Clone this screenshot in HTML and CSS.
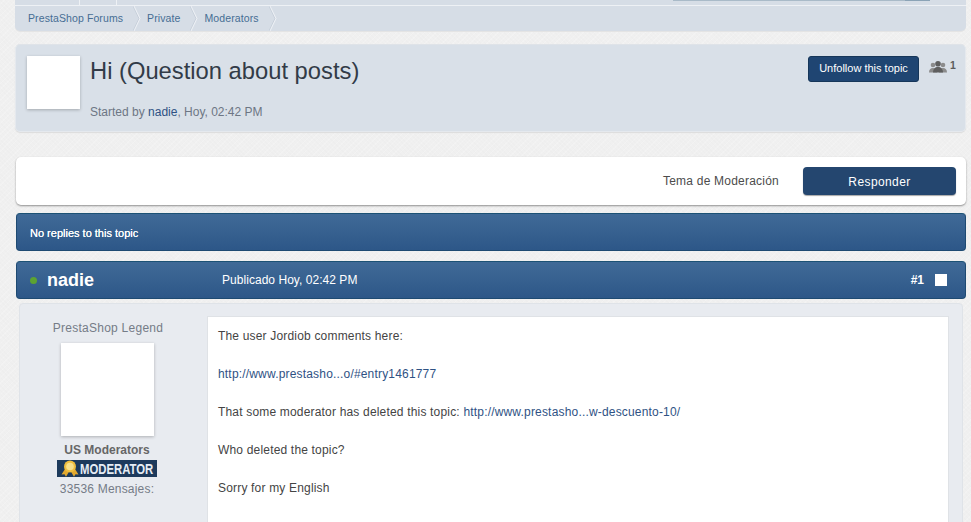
FILE: index.html
```html
<!DOCTYPE html>
<html lang="en">
<head>
<meta charset="utf-8">
<title>Hi (Question about posts) - PrestaShop Forums</title>
<link rel="stylesheet" href="styles.css">
</head>
<body>
<div class="page">
  <div class="crumb-panel">
    <div class="top-strip">
      <div class="top-tabs"><span class="tab tab-a"></span><span class="tab tab-b"></span></div>
      <div class="top-search"><span class="top-search-btn"></span></div>
    </div>
    <ul class="crumbs">
      <li class="crumb"><a href="#">PrestaShop Forums</a>
        <svg class="crumb-sep" width="8" height="25" viewBox="0 0 8 25" aria-hidden="true"><path d="M0 0 6 12.500 0 25" fill="none" stroke="#c6cfda"/><path d="M1 0 7 12.500 1 25" fill="none" stroke="#eef1f5"/></svg>
      </li>
      <li class="crumb"><a href="#">Private</a>
        <svg class="crumb-sep" width="8" height="25" viewBox="0 0 8 25" aria-hidden="true"><path d="M0 0 6 12.500 0 25" fill="none" stroke="#c6cfda"/><path d="M1 0 7 12.500 1 25" fill="none" stroke="#eef1f5"/></svg>
      </li>
      <li class="crumb"><a href="#">Moderators</a>
        <svg class="crumb-sep" width="8" height="25" viewBox="0 0 8 25" aria-hidden="true"><path d="M0 0 6 12.500 0 25" fill="none" stroke="#c6cfda"/><path d="M1 0 7 12.500 1 25" fill="none" stroke="#eef1f5"/></svg>
      </li>
    </ul>
  </div>

  <section class="topic-head">
    <div class="topic-photo"></div>
    <div class="topic-info">
      <h1 class="topic-title">Hi (Question about posts)</h1>
      <p class="topic-meta">Started by <a href="#">nadie</a>, Hoy, 02:42 PM</p>
    </div>
    <div class="topic-follow">
      <a class="btn-follow" href="#">Unfollow this topic</a>
      <span class="followers">
        <svg class="followers-icon" width="18" height="14" viewBox="0 0 18 14" aria-hidden="true">
          <circle cx="4" cy="5" r="2.300" fill="#8c8c8c"/>
          <circle cx="14" cy="5" r="2.300" fill="#8c8c8c"/>
          <path d="M0 12.500c0-3 1.500-4.500 4-4.500s4 1.500 4 4.500zM10 12.500c0-3 1.500-4.500 4-4.500s4 1.500 4 4.500z" fill="#8c8c8c"/>
          <circle cx="9" cy="3.800" r="2.800" fill="#5f5f5f"/>
          <path d="M4 12.500c0-3.500 2-5.500 5-5.500s5 2 5 5.500z" fill="#5f5f5f"/>
        </svg>
        <span class="followers-count">1</span>
      </span>
    </div>
  </section>

  <section class="action-bar">
    <span class="action-label">Tema de Moderación</span>
    <a class="btn-reply" href="#">Responder</a>
  </section>

  <div class="blue-bar replies-bar">No replies to this topic</div>

  <article class="post">
    <header class="blue-bar post-head">
      <span class="online-dot"></span>
      <span class="post-author">nadie</span>
      <span class="post-date">Publicado Hoy, 02:42 PM</span>
      <span class="post-num">#1</span>
      <span class="post-check"></span>
    </header>
    <div class="post-body">
      <aside class="author">
        <div class="author-rank">PrestaShop Legend</div>
        <div class="author-photo"></div>
        <div class="author-group">US Moderators</div>
        <div class="author-badge">
          <svg class="author-badge-icon" width="18" height="17" viewBox="0 0 18 17" aria-hidden="true">
            <path d="M4 9 .5 14.500l3-.3L5 16.800l3-5zM14 9l3.500 5.500-3-.3-1.500 2.600-3-5z" fill="#e2a92f"/>
            <circle cx="9" cy="6.500" r="6" fill="#efbe3e"/>
            <circle cx="9" cy="6.500" r="3.800" fill="#f8e08a"/>
          </svg>
          <span class="author-badge-text">MODERATOR</span>
        </div>
        <div class="author-posts">33536 Mensajes:</div>
      </aside>
      <div class="post-content">
        <p>The user Jordiob comments here:</p>
        <p><a href="#">http://www.prestasho...o/#entry1461777</a></p>
        <p>That some moderator has deleted this topic: <a href="#">http://www.prestasho...w-descuento-10/</a></p>
        <p>Who deleted the topic?</p>
        <p>Sorry for my English</p>
      </div>
    </div>
  </article>
</div>
</body>
</html>
```

FILE: styles.css
```css
* { box-sizing: border-box; }
html, body { margin: 0; height: 522px; overflow: hidden; }
body {
  background-color: #f0f0f0;
  background-image:
    repeating-linear-gradient(45deg, rgba(0,0,0,.008) 0 1px, transparent 1px 3px),
    repeating-linear-gradient(-45deg, rgba(255,255,255,.18) 0 1px, transparent 1px 4px);
  font-family: "Liberation Sans", Arial, sans-serif;
  font-size: 12px;
  color: #4a4a4a;
}
a { color: #2f5284; text-decoration: none; }
p { margin: 0; }

.page { padding: 0 5px 0 15px; }

/* breadcrumb panel */
.crumb-panel {
  height: 31px;
  background: #d6dde6;
  border-radius: 0 0 5px 5px;
  box-shadow: 0 1px 0 #e4e4e4;
}
.top-strip {
  height: 6px;
  border-bottom: 1px solid #eef1f5;
  display: flex;
  justify-content: space-between;
}
.top-tabs { display: flex; }
.tab { height: 5px; border-right: 1px solid #eef1f5; }
.tab-a { width: 65px; }
.tab-b { width: 37px; }
.top-search {
  width: 257px;
  height: 1px;
  margin-right: 36px;
  background: #a9bac8;
  display: flex;
  justify-content: flex-end;
}
.top-search-btn { width: 25px; background: #8ba3b6; }
.crumbs { list-style: none; margin: 0; padding: 0 0 0 13px; display: flex; height: 25px; }
.crumb { display: flex; align-items: center; }
.crumb a { font-size: 10.500px; color: #466d94; letter-spacing: .1px; padding-bottom: 1px; }
.crumb-sep { flex: none; margin: 0 6px 0 10px; }

/* topic header */
.topic-head {
  margin-top: 13px;
  height: 88px;
  display: flex;
  padding: 11px 11px 0 11px;
  background: #d9e0e8;
  border: 1px solid #e5e9ee;
  border-top-color: #dfe3e8;
  border-radius: 5px;
  box-shadow: 0 1px 1px #dcdcdc;
}
.topic-photo {
  width: 53px;
  height: 53px;
  flex: none;
  background: #fff;
  box-shadow: 0 1px 3px rgba(0,0,0,.25);
}
.topic-info { flex: 1; padding-left: 10px; }
.topic-title {
  margin: 0;
  font-weight: 400;
  font-size: 23.750px;
  line-height: 30px;
  color: #323b47;
}
.topic-meta { margin-top: 18px; font-size: 12px; line-height: 16px; color: #6d7684; }
.topic-follow { display: flex; align-items: flex-start; }
.btn-follow {
  display: block;
  width: 111px;
  height: 26px;
  line-height: 22px;
  text-align: center;
  font-size: 11px;
  color: #fff;
  background: #1f4572;
  border: 1px solid #163659;
  border-radius: 3px;
}
.followers { display: flex; align-items: flex-start; margin-left: 10px; width: 25px; }
.followers-icon { flex: none; margin-top: 4px; }
.followers-count { margin-left: 3px; margin-top: 3px; font-size: 10.500px; font-weight: 700; color: #5c5c5c; }

/* action bar */
.action-bar {
  margin: 25px 0 0 1px;
  height: 48px;
  background: #fff;
  border-radius: 5px;
  box-shadow: 0 1px 2px rgba(0,0,0,.4);
  display: flex;
  justify-content: flex-end;
  align-items: center;
  padding: 0 10px 0 0;
}
.action-label { font-size: 12px; letter-spacing: .22px; color: #4c4c4c; }
.btn-reply {
  width: 153px;
  height: 28px;
  margin-left: 24px;
  line-height: 31px;
  text-align: center;
  font-size: 12px;
  letter-spacing: .4px;
  color: #fff;
  background: #24466f;
  border-radius: 4px;
  box-shadow: 0 1px 1px rgba(0,0,0,.35);
}

/* blue bars */
.blue-bar {
  background: linear-gradient(#406a97, #2d5788);
  border: 1px solid #1e4a72;
  border-top-color: #1c5275;
  border-radius: 4px;
  color: #fff;
}
.replies-bar {
  margin: 8px 0 0 1px;
  height: 38px;
  padding-left: 13px;
  font-size: 11px;
  line-height: 38px;
  text-shadow: 0 0 .6px #fff;
}
.post { margin: 10px 0 0 1px; }
.post-head { height: 38px; display: flex; align-items: center; padding: 0 18px 0 13px; }
.online-dot { width: 7px; height: 7px; border-radius: 50%; background: #5ca332; flex: none; }
.post-author { width: 175px; margin-left: 10px; font-size: 18px; font-weight: 700; }
.post-date { flex: 1; font-size: 12px; letter-spacing: .04px; }
.post-num { font-size: 12px; font-weight: 700; }
.post-check { width: 12px; height: 12px; margin-left: 11px; background: #fff; }

.post-body {
  margin: 4px 3px 0 3px;
  height: 240px;
  display: flex;
  align-items: flex-start;
  padding: 12px 13px 0 0;
  background: #e8ebf0;
  border: 1px solid #dfe3e8;
  border-radius: 4px 4px 0 0;
}
.author { width: 187px; flex: none; text-align: center; padding-right: 13px; }
.author-rank { font-size: 12px; line-height: 17px; margin-top: 4px; padding-left: 2px; color: #757c87; letter-spacing: .25px; }
.author-photo {
  width: 93px;
  height: 93px;
  margin: 6px auto 0;
  background: #fff;
  box-shadow: 0 1px 3px rgba(0,0,0,.25);
}
.author-group { margin-top: 7px; font-size: 12px; line-height: 14px; font-weight: 700; color: #666; }
.author-badge {
  width: 100px;
  height: 17px;
  margin: 3px auto 0;
  padding-left: 4px;
  display: flex;
  align-items: center;
  background: #1d3a5c;
  overflow: hidden;
}
.author-badge-icon { flex: none; }
.author-badge-text {
  flex: none;
  margin-left: 1px;
  font-size: 14px;
  font-weight: 700;
  color: #e6edf5;
  transform: scaleX(.81);
  transform-origin: left center;
  white-space: nowrap;
}
.author-posts { margin-top: 4px; font-size: 12px; line-height: 16px; color: #757c87; letter-spacing: .2px; }

.post-content {
  flex: 1;
  height: 230px;
  padding: 11px 10px 0;
  background: #fff;
  border: 1px solid #dfe2e6;
  border-bottom: 0;
  font-size: 12px;
  line-height: 16px;
  letter-spacing: .18px;
  color: #444;
}
.post-content p { margin-bottom: 22px; }
```
